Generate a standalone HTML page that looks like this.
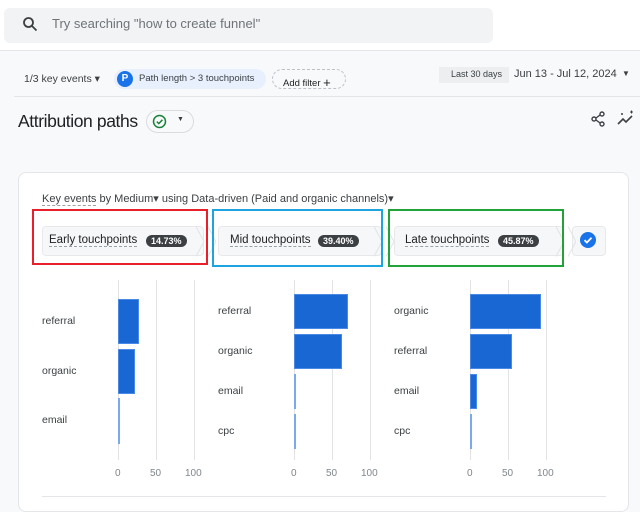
<!DOCTYPE html>
<html><head><meta charset="utf-8"><style>
*{box-sizing:border-box;margin:0;padding:0}
body{width:640px;height:500px;overflow:hidden;background:#f8f9fb;font-family:"Liberation Sans",sans-serif;color:#3c4043;position:relative}
.a{position:absolute}
.top{left:0;top:0;width:640px;height:51px;background:#fff;border-bottom:1px solid #e3e5e8}
.search{left:4px;top:8px;width:489px;height:35px;background:#f1f3f4;border-radius:6px}
.t{font-size:11px;white-space:nowrap}
.lbl{font-size:10.5px;color:#3c4043}
.tick{font-size:10px;color:#80868b}
.grid{width:1px;background:#e3e3e3;top:280px;height:180px}
.bar{background:#1967d2;border:1px solid #4a8ae6}
.thin{background:#7aa9ee;width:2px}
.tab{top:226px;height:30px;background:#f6f7f8;border:1px solid #e6e8ea;border-radius:4px}
.pill{background:#3c4043;color:#fff;font-size:9px;font-weight:bold;border-radius:8px;padding:1px 5px}
.u{border-bottom:1px dashed #9aa0a6}
</style></head><body>
<div class="a top"></div>
<div class="a search"></div>
<svg class="a" style="left:22px;top:16px" width="16" height="16" viewBox="0 0 16 16"><circle cx="6.5" cy="6.5" r="4.5" fill="none" stroke="#3c4043" stroke-width="1.8"/><path d="M10 10l4.5 4.5" stroke="#3c4043" stroke-width="1.8"/></svg>
<div class="a" style="left:52px;top:16px;font-size:13px;color:#6f7378">Try searching "how to create funnel"</div>

<div class="a t" style="left:24px;top:73px;font-size:10.5px">1/3 key events ▾</div>
<div class="a" style="left:114px;top:69px;width:152px;height:20px;background:#e8f0fe;border-radius:10px"></div>
<div class="a" style="left:117px;top:71px;width:16px;height:16px;border-radius:50%;background:#1a73e8;color:#fff;font-size:10px;font-weight:bold;text-align:center;line-height:16px">P</div>
<div class="a t" style="left:139px;top:73px;font-size:9.5px">Path length &gt; 3 touchpoints</div>
<div class="a" style="left:272px;top:69px;width:74px;height:20px;border:1px dashed #bdc1c6;border-radius:10px;font-size:9.5px;padding:4px 0 0 10px;color:#202124">Add filter <span style="font-size:13px;position:relative;top:1px">+</span></div>
<div class="a" style="left:439px;top:67px;width:70px;height:16px;background:#eceef0"></div>
<div class="a t" style="left:451px;top:69px;font-size:9px;color:#3c4043">Last 30 days</div>
<div class="a t" style="left:514px;top:68px;font-size:11px">Jun 13 - Jul 12, 2024</div>
<div class="a t" style="left:622px;top:69px;font-size:8px">▼</div>
<div class="a" style="left:14px;top:96px;width:626px;height:1px;background:#e3e5e8"></div>

<div class="a" style="left:18px;top:111px;font-size:17.5px;color:#202124;letter-spacing:-0.4px">Attribution paths</div>
<div class="a" style="left:146px;top:110px;width:48px;height:23px;border:1px solid #dadce0;border-radius:12px"></div>
<svg class="a" style="left:152px;top:114px" width="15" height="15" viewBox="0 0 15 15"><circle cx="7.5" cy="7.5" r="6" fill="none" stroke="#188038" stroke-width="1.5"/><path d="M4.8 7.6l2 2 3.6-3.8" fill="none" stroke="#188038" stroke-width="1.5"/></svg>
<div class="a t" style="left:177px;top:116px;font-size:7px">▼</div>
<svg class="a" style="left:590px;top:110px" width="16" height="18" viewBox="0 0 16 18"><circle cx="12" cy="4" r="2" fill="none" stroke="#3c4043" stroke-width="1.4"/><circle cx="4" cy="9" r="2" fill="none" stroke="#3c4043" stroke-width="1.4"/><circle cx="12" cy="14" r="2" fill="none" stroke="#3c4043" stroke-width="1.4"/><path d="M6 8l4-3M6 10l4 3" stroke="#3c4043" stroke-width="1.4"/></svg>
<svg class="a" style="left:616px;top:110px" width="20" height="18" viewBox="0 0 20 18"><path d="M2 14l5-5 3 3 6-6" fill="none" stroke="#3c4043" stroke-width="1.6"/><path d="M5 4h2M6 3v2M14 2h3M15.5 0.5v3" stroke="#3c4043" stroke-width="1"/></svg>

<div class="a" style="left:18px;top:172px;width:611px;height:340px;background:#fff;border:1px solid #e3e5e8;border-radius:8px"></div>
<div class="a t" style="left:42px;top:192px;font-size:11px"><span class="u">Key events</span> by Medium▾ using Data-driven (Paid and organic channels)▾</div>

<div class="a tab" style="left:42px;width:162px"></div>
<div class="a tab" style="left:218px;width:164px"></div>
<div class="a tab" style="left:394px;width:170px"></div>
<div class="a tab" style="left:572px;width:34px"></div>
<svg class="a" style="left:196px;top:226px" width="20" height="31"><path d="M0 0.5l8 15-8 15" fill="#f6f7f8" stroke="#e1e3e5"/><path d="M12 0.5l8 15-8 15" fill="none" stroke="#e1e3e5"/></svg>
<svg class="a" style="left:374px;top:226px" width="20" height="31"><path d="M0 0.5l8 15-8 15" fill="#f6f7f8" stroke="#e1e3e5"/><path d="M12 0.5l8 15-8 15" fill="none" stroke="#e1e3e5"/></svg>
<svg class="a" style="left:556px;top:226px" width="20" height="31"><path d="M0 0.5l8 15-8 15" fill="#f6f7f8" stroke="#e1e3e5"/><path d="M12 0.5l8 15-8 15" fill="none" stroke="#e1e3e5"/></svg>
<div class="a t" style="left:49px;top:234px;font-size:11.5px;color:#202124"><span class="u">Early touchpoints</span></div>
<div class="a pill" style="left:146px;top:235px">14.73%</div>
<div class="a t" style="left:230px;top:234px;font-size:11.5px;color:#202124"><span class="u">Mid touchpoints</span></div>
<div class="a pill" style="left:318px;top:235px">39.40%</div>
<div class="a t" style="left:405px;top:234px;font-size:11.5px;color:#202124"><span class="u">Late touchpoints</span></div>
<div class="a pill" style="left:498px;top:235px">45.87%</div>
<div class="a" style="left:580px;top:232px;width:16px;height:16px;border-radius:50%;background:#1a73e8"></div>
<svg class="a" style="left:580px;top:232px" width="16" height="16"><path d="M4.5 8.2l2.4 2.3 4.6-4.8" fill="none" stroke="#fff" stroke-width="1.8"/></svg>
<div class="a" style="left:32px;top:209px;width:176px;height:56px;border:2px solid #e8202a"></div>
<div class="a" style="left:212px;top:209px;width:171px;height:58px;border:2px solid #1ea5e0"></div>
<div class="a" style="left:388px;top:209px;width:176px;height:58px;border:2px solid #22a33a"></div>

<div class="a grid" style="left:118px"></div><div class="a grid" style="left:156px"></div><div class="a grid" style="left:194px"></div>
<div class="a grid" style="left:294px"></div><div class="a grid" style="left:332px"></div><div class="a grid" style="left:370px"></div>
<div class="a grid" style="left:470px"></div><div class="a grid" style="left:508px"></div><div class="a grid" style="left:546px"></div>

<div class="a bar" style="left:118px;top:299px;width:21px;height:45px"></div>
<div class="a bar" style="left:118px;top:349px;width:17px;height:45px"></div>
<div class="a thin" style="left:118px;top:398px;height:46px"></div>
<div class="a lbl" style="left:42px;top:315px">referral</div>
<div class="a lbl" style="left:42px;top:365px">organic</div>
<div class="a lbl" style="left:42px;top:414px">email</div>

<div class="a bar" style="left:294px;top:294px;width:54px;height:35px"></div>
<div class="a bar" style="left:294px;top:334px;width:48px;height:35px"></div>
<div class="a thin" style="left:294px;top:374px;height:35px"></div>
<div class="a thin" style="left:294px;top:414px;height:35px"></div>
<div class="a lbl" style="left:218px;top:305px">referral</div>
<div class="a lbl" style="left:218px;top:345px">organic</div>
<div class="a lbl" style="left:218px;top:385px">email</div>
<div class="a lbl" style="left:218px;top:425px">cpc</div>

<div class="a bar" style="left:470px;top:294px;width:71px;height:35px"></div>
<div class="a bar" style="left:470px;top:334px;width:42px;height:35px"></div>
<div class="a bar" style="left:470px;top:374px;width:7px;height:35px"></div>
<div class="a thin" style="left:470px;top:414px;height:35px"></div>
<div class="a lbl" style="left:394px;top:305px">organic</div>
<div class="a lbl" style="left:394px;top:345px">referral</div>
<div class="a lbl" style="left:394px;top:385px">email</div>
<div class="a lbl" style="left:394px;top:425px">cpc</div>

<div class="a tick" style="left:115px;top:468px">0</div><div class="a tick" style="left:150px;top:468px">50</div><div class="a tick" style="left:185px;top:468px">100</div>
<div class="a tick" style="left:291px;top:468px">0</div><div class="a tick" style="left:326px;top:468px">50</div><div class="a tick" style="left:361px;top:468px">100</div>
<div class="a tick" style="left:467px;top:468px">0</div><div class="a tick" style="left:502px;top:468px">50</div><div class="a tick" style="left:537px;top:468px">100</div>
<div class="a" style="left:42px;top:496px;width:564px;height:1px;background:#e3e5e8"></div>
</body></html>
